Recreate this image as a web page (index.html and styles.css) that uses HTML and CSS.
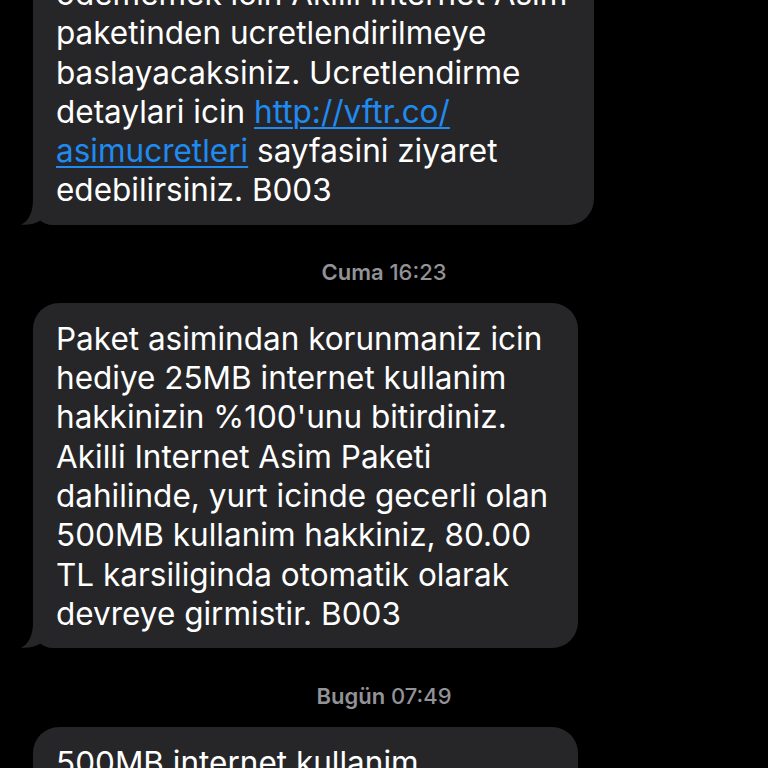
FILE: index.html
```html
<!DOCTYPE html>
<html lang="tr">
<head>
<meta charset="utf-8">
<title>Mesajlar</title>
<link rel="stylesheet" href="styles.css">
</head>
<body>
<main class="thread">
  <div class="bubble bubble-first w1">
    <p class="msg">odememek icin Akilli Internet Asim<br>paketinden ucretlendirilmeye<br>baslayacaksiniz. Ucretlendirme<br>detaylari icin <a class="link" href="#">http://vftr.co/<br>asimucretleri</a> sayfasini ziyaret<br>edebilirsiniz. B003</p>
    <svg class="tail" viewBox="0 0 30 30" width="30" height="30" aria-hidden="true"><path d="M12 4 C12 17 8 26 0 29.6 C6 30.6 14 28.6 20 25.2 L30 20 L30 4 Z"/></svg>
  </div>

  <div class="stamp stamp-a"><b>Cuma</b> 16:23</div>

  <div class="bubble w2">
    <p class="msg">Paket asimindan korunmaniz icin<br>hediye 25MB internet kullanim<br>hakkinizin %100'unu bitirdiniz.<br>Akilli Internet Asim Paketi<br>dahilinde, yurt icinde gecerli olan<br>500MB kullanim hakkiniz, 80.00<br>TL karsiliginda otomatik olarak<br>devreye girmistir. B003</p>
    <svg class="tail" viewBox="0 0 30 30" width="30" height="30" aria-hidden="true"><path d="M12 4 C12 17 8 26 0 29.6 C6 30.6 14 28.6 20 25.2 L30 20 L30 4 Z"/></svg>
  </div>

  <div class="stamp stamp-b"><b>Bugün</b> 07:49</div>

  <div class="bubble w2">
    <p class="msg">500MB internet kullanim<br>hakkinizin %80'ini kullandiniz.<br>B003</p>
  </div>
</main>
</body>
</html>
```

FILE: styles.css
```css
html, body {
  margin: 0;
  padding: 0;
  background: #000;
  height: 768px;
  overflow: hidden;
}

.thread {
  display: flex;
  flex-direction: column;
  align-items: flex-start;
  font-family: "Inter", "Noto Sans", sans-serif;
}

.bubble {
  position: relative;
  box-sizing: border-box;
  margin-left: 33px;
  padding: 16px 20px 15px 23px;
  background: #262628;
  border-radius: 26px;
  border-bottom-left-radius: 20px;
}

.bubble-first {
  margin-top: -42px;
}

.w1 { width: 561px; }
.w2 { width: 545px; }

.msg {
  margin: 0;
  color: #ffffff;
  font-size: 31.5px;
  line-height: 39.3px;
  letter-spacing: 0;
  white-space: nowrap;
}

.link {
  color: #1f8bf2;
  text-decoration: underline;
  text-decoration-thickness: 2px;
  text-underline-offset: 4px;
}

.tail {
  position: absolute;
  left: -12px;
  bottom: 0;
  fill: #262628;
}

.stamp {
  align-self: center;
  color: #929297;
  font-size: 22px;
  line-height: 26px;
  font-weight: 500;
  margin-bottom: 18px;
}

.stamp b {
  font-weight: 600;
}

.stamp-a { margin-top: 34px; }
.stamp-b { margin-top: 35px; }
```
